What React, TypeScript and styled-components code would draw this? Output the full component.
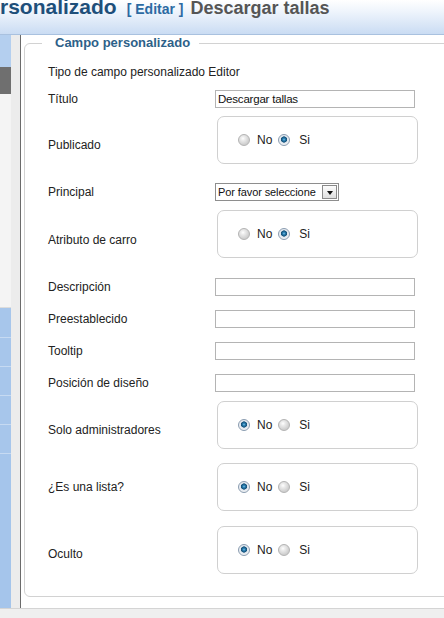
import React from "react"
import styled, { createGlobalStyle } from "styled-components"

const GlobalStyle = createGlobalStyle`
  html, body {
    margin: 0;
    padding: 0;
    background: #ffffff;
    overflow: hidden;
  }
  body {
    font-family: "Liberation Sans", Arial, sans-serif;
    color: #222222;
  }
`

const Page = styled.div`
  width: 444px;
  height: 618px;
  overflow: hidden;
  display: flex;
  flex-direction: column;
`

const Header = styled.div`
  height: 34px;
  flex-shrink: 0;
  overflow: hidden;
  background: linear-gradient(#ffffff 0%, #eef4fc 35%, #cadcf3 100%);
  border-bottom: 1px solid #a9c1df;
`

const TitleLine = styled.div`
  display: flex;
  align-items: baseline;
  white-space: nowrap;
  margin-top: -4px;
  line-height: 21px;
`

const TitleMain = styled.span`
  font-size: 21px;
  font-weight: bold;
  color: #1e4f7a;
`

const TitleEdit = styled.span`
  margin-left: 10px;
  font-size: 14px;
  font-weight: bold;
  color: #2c6aa2;
`

const TitleItem = styled.span`
  margin-left: 7px;
  font-size: 18px;
  font-weight: bold;
  color: #555555;
`

const Body = styled.div`
  display: flex;
  height: 573px;
  flex-shrink: 0;
`

const Sidebar = styled.div`
  width: 11px;
  display: flex;
  flex-direction: column;
  background: #a5c5eb;
`

const SideBlock = styled.div<{ h: number; bg: string; line?: string }>`
  height: ${({ h }) => h}px;
  flex-shrink: 0;
  background: ${({ bg }) => bg};
  border-bottom: 1px solid ${({ line, bg }) => line || bg};
  box-sizing: border-box;
`

const Gutter = styled.div`
  width: 9px;
  background: #ececec;
`

const Divider = styled.div`
  width: 1px;
  background: #6b6b6b;
`

const Main = styled.div`
  flex: 1;
  background: #ffffff;
  padding-left: 3px;
  overflow: hidden;
`

const Footer = styled.div`
  height: 10px;
  flex-shrink: 0;
  box-sizing: border-box;
  background: #efefef;
  border-top: 1px solid #d4d4d4;
`

const Fieldset = styled.fieldset`
  margin: 0;
  padding: 0;
  width: 440px;
  min-width: 0;
  box-sizing: border-box;
  border: 1px solid #d2d2d2;
  border-radius: 6px;
`

const Legend = styled.legend`
  margin-left: 17px;
  padding: 0 9px 0 13px;
  font-size: 13px;
  line-height: 16px;
  font-weight: bold;
  color: #2d6189;
`

const Rows = styled.div`
  padding: 13px 0 22px 23px;
  display: flex;
  flex-direction: column;
`

const InfoLine = styled.div`
  font-size: 12px;
  line-height: 16px;
`

const Row = styled.div<{ gap: number }>`
  display: grid;
  grid-template-columns: 167px auto;
  align-items: center;
  margin-top: ${({ gap }) => gap}px;
`

const Label = styled.div<{ shift?: number }>`
  font-size: 12px;
  line-height: 16px;
  padding-top: ${({ shift }) => (shift && shift > 0 ? shift * 2 : 0)}px;
  padding-bottom: ${({ shift }) => (shift && shift < 0 ? -shift * 2 : 0)}px;
`

const TextInput = styled.div`
  width: 200px;
  height: 18px;
  box-sizing: border-box;
  border: 1px solid #b4b4b4;
  padding: 0 2px;
  font-size: 11.5px;
  line-height: 16px;
  color: #111111;
  letter-spacing: -0.2px;
  white-space: nowrap;
`

const Select = styled.div`
  width: 124px;
  height: 18px;
  box-sizing: border-box;
  border: 1px solid #8e8e8e;
  display: flex;
  align-items: center;
  justify-content: space-between;
  padding: 0 1px 0 2px;
  font-size: 11px;
  letter-spacing: -0.1px;
  color: #111111;
`

const SelectButton = styled.span`
  width: 15px;
  height: 14px;
  box-sizing: border-box;
  border: 1px solid #8a8a8a;
  background: linear-gradient(#fdfdfd, #dedede);
  display: flex;
  align-items: center;
  justify-content: center;

  &::after {
    content: "";
    border-left: 3.5px solid transparent;
    border-right: 3.5px solid transparent;
    border-top: 4px solid #111111;
    margin-top: 1px;
  }
`

const RadioBox = styled.div`
  margin-left: 2px;
  width: 201px;
  height: 48px;
  box-sizing: border-box;
  border: 1px solid #d0d0d0;
  border-radius: 7px;
  display: flex;
  align-items: center;
  padding-left: 20px;
  font-size: 12px;
`

const Radio = styled.span<{ checked?: boolean }>`
  width: 12px;
  height: 12px;
  box-sizing: border-box;
  border-radius: 50%;
  border: 1px solid ${({ checked }) => (checked ? "#8a9cb0" : "#b3b3b3")};
  background: ${({ checked }) =>
    checked
      ? "radial-gradient(circle at 50% 45%, #7cc6ea 0, #2b7fb2 1.2px, #134f76 2.8px, #dfe6ee 3.4px, #f6f6f6 6px)"
      : "radial-gradient(circle at 40% 35%, #ffffff 0, #ececec 2px, #cfcfcf 6px)"};
`

const RadioText = styled.span<{ left: number }>`
  margin-left: ${({ left }) => left}px;
  margin-right: 6px;
`

type YesNoProps = { yes: boolean }

const YesNo = ({ yes }: YesNoProps) => (
  <RadioBox>
    <Radio checked={!yes} />
    <RadioText left={7}>No</RadioText>
    <Radio checked={yes} />
    <RadioText left={9}>Si</RadioText>
  </RadioBox>
)

const sideItems = [30, 29, 29, 29, 29]

const App = () => {
  return (
    <Page>
      <GlobalStyle />
      <Header>
        <TitleLine>
          <TitleMain>rsonalizado</TitleMain>
          <TitleEdit>[ Editar ]</TitleEdit>
          <TitleItem>Descargar tallas</TitleItem>
        </TitleLine>
      </Header>
      <Body>
        <Sidebar>
          <SideBlock h={32} bg="#b4cfef" />
          <SideBlock h={27} bg="#6f6f6f" />
          <SideBlock h={214} bg="#f4f4f4" line="#dcdcdc" />
          {sideItems.map((h, i) => (
            <SideBlock key={i} h={h} bg="#a7c6eb" line="#c6daf2" />
          ))}
        </Sidebar>
        <Gutter />
        <Divider />
        <Main>
          <Fieldset>
            <Legend>Campo personalizado</Legend>
            <Rows>
              <InfoLine>Tipo de campo personalizado Editor</InfoLine>
              <Row gap={10}>
                <Label>Título</Label>
                <TextInput>Descargar tallas</TextInput>
              </Row>
              <Row gap={8}>
                <Label shift={5}>Publicado</Label>
                <YesNo yes />
              </Row>
              <Row gap={19}>
                <Label>Principal</Label>
                <Select>
                  <span>Por favor seleccione</span>
                  <SelectButton />
                </Select>
              </Row>
              <Row gap={9}>
                <Label shift={6}>Atributo de carro</Label>
                <YesNo yes />
              </Row>
              <Row gap={20}>
                <Label>Descripción</Label>
                <TextInput />
              </Row>
              <Row gap={14}>
                <Label>Preestablecido</Label>
                <TextInput />
              </Row>
              <Row gap={14}>
                <Label>Tooltip</Label>
                <TextInput />
              </Row>
              <Row gap={14}>
                <Label>Posición de diseño</Label>
                <TextInput />
              </Row>
              <Row gap={9}>
                <Label shift={5}>Solo administradores</Label>
                <YesNo yes={false} />
              </Row>
              <Row gap={14}>
                <Label>¿Es una lista?</Label>
                <YesNo yes={false} />
              </Row>
              <Row gap={15}>
                <Label shift={4}>Oculto</Label>
                <YesNo yes={false} />
              </Row>
            </Rows>
          </Fieldset>
        </Main>
      </Body>
      <Footer />
    </Page>
  )
}

export default App
